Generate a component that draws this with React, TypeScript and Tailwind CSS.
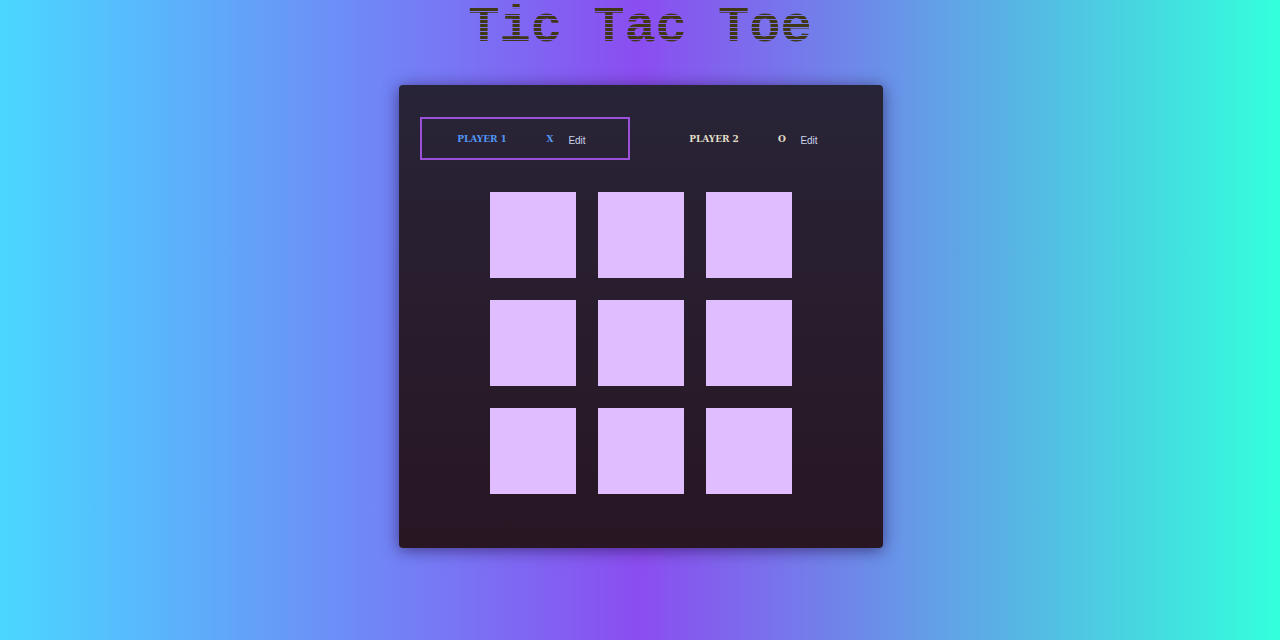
import { useState } from "react";

type Mark = "X" | "O";

function Player({ initialName, mark, active }: { initialName: string; mark: Mark; active: boolean }) {
  const [name, setName] = useState(initialName);
  const [editing, setEditing] = useState(false);
  return (
    <li
      className={`flex h-[43px] w-[210px] items-center border-2 pl-1.5 ${
        active ? "border-[#9b50d9] text-[#5295f5]" : "border-transparent text-[#e1dec7]"
      }`}
    >
      <span className="w-27 text-center font-['DejaVu_Serif_Condensed','Liberation_Serif',serif] text-[10px] leading-4 font-bold uppercase">
        {editing ? (
          <input
            aria-label={`Name of player ${mark}`}
            className="w-20 bg-transparent text-center"
            value={name}
            onChange={(e) => setName(e.target.value)}
          />
        ) : (
          name
        )}
      </span>
      <span className="w-7 text-center font-['DejaVu_Serif_Condensed','Liberation_Serif',serif] text-[10px] leading-4 font-bold">
        {mark}
      </span>
      <button
        type="button"
        className="w-[26px] cursor-pointer pt-1 text-center text-[10px] leading-4 text-[#c9d3ef]"
        onClick={() => setEditing(!editing)}
      >
        {editing ? "Save" : "Edit"}
      </button>
    </li>
  );
}

export default function App() {
  const [moves, setMoves] = useState<number[]>([]);
  const turn: Mark = moves.length % 2 === 0 ? "X" : "O";
  return (
    <div className="min-h-screen bg-[linear-gradient(90deg,#4ad7ff,#8b4df0,#33ffdc)] pb-8 font-['Liberation_Sans',sans-serif]">
      <header className="flex justify-center">
        <h1 className="bg-[repeating-linear-gradient(180deg,#403714_0px,#403714_3px,transparent_3px,transparent_4px)] bg-clip-text font-['Liberation_Mono',monospace] text-[52px] leading-[56px] font-bold whitespace-nowrap text-transparent">
          Tic Tac Toe
        </h1>
      </header>
      <main className="flex justify-center pt-[29px] pl-0.5">
        <section className="w-[484px] rounded bg-linear-to-b from-[#282437] to-[#281623] px-[21px] pt-8 pb-[54px] shadow-[0_2px_16px_rgba(30,10,60,0.6)]">
          <ol className="mb-8 flex justify-between">
            <Player initialName="Player 1" mark="X" active={turn === "X"} />
            <Player initialName="Player 2" mark="O" active={turn === "O"} />
          </ol>
          <div className="grid grid-cols-[repeat(3,86px)] justify-center gap-[22px]">
            {Array.from({ length: 9 }, (_, i) => {
              const played = moves.indexOf(i);
              return (
                <button
                  key={i}
                  type="button"
                  aria-label={`Square ${i + 1}`}
                  disabled={played >= 0}
                  onClick={() => setMoves([...moves, i])}
                  className="h-[86px] bg-[#dfbdfe] font-['Liberation_Serif',serif] text-5xl text-[#3f3b00]"
                >
                  {played < 0 ? "" : played % 2 === 0 ? "X" : "O"}
                </button>
              );
            })}
          </div>
        </section>
      </main>
    </div>
  );
}
